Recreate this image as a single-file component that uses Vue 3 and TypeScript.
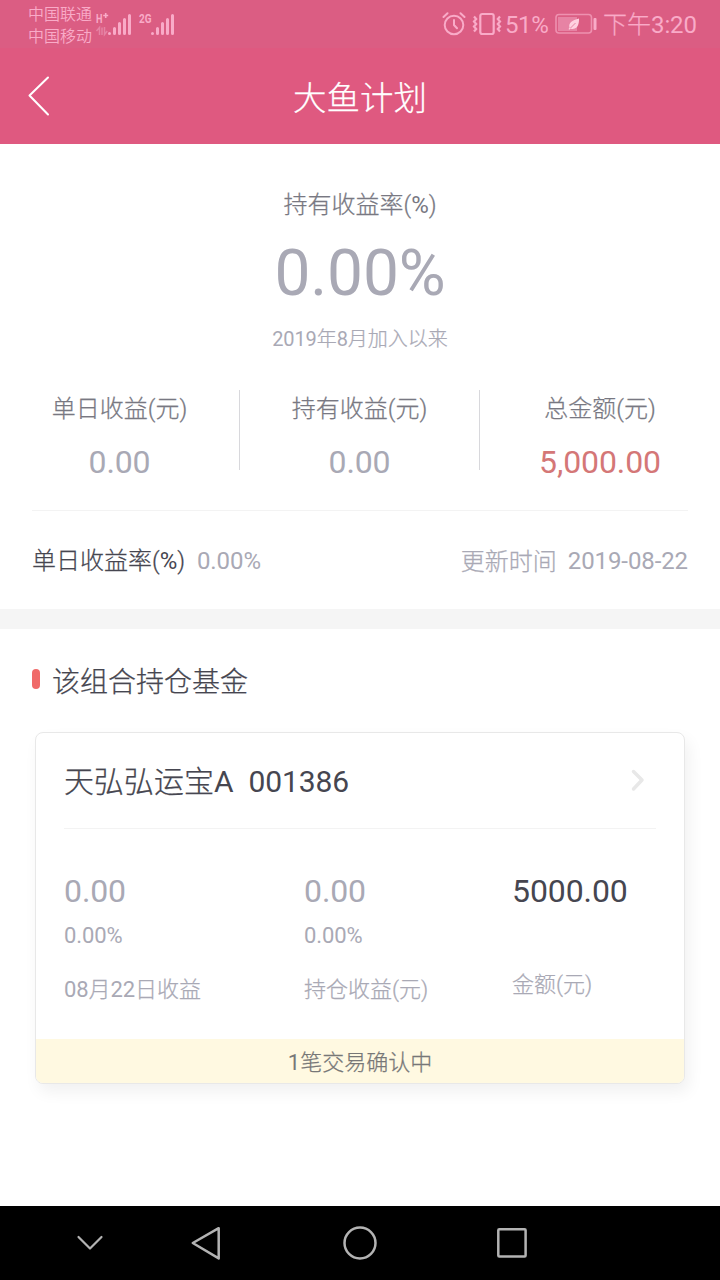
<script setup lang="ts">
interface Piece { text: string; cjk: boolean }

const split = (value: string): Piece[] =>
  (value.match(/[\u4e00-\u9fff()]+|[^\u4e00-\u9fff()]+/g) ?? []).map((text) => ({
    text,
    cjk: /[\u4e00-\u9fff()]/.test(text),
  }))

const stats = [
  { label: '单日收益(元)', value: '0.00', accent: false },
  { label: '持有收益(元)', value: '0.00', accent: false },
  { label: '总金额(元)', value: '5,000.00', accent: true },
]

const holdings = [
  { value: '0.00', rate: '0.00%', label: '08月22日收益' },
  { value: '0.00', rate: '0.00%', label: '持仓收益(元)' },
  { value: '5000.00', rate: '', label: '金额(元)' },
]
</script>

<template>
  <main class="screen">
    <div class="status">
      <div class="carriers"><span>中国联通</span><span>中国移动</span></div>
      <svg class="signals" width="82" height="48" viewBox="0 0 82 48">
        <g class="network">
          <text x="1" y="22.700" textLength="6.500" lengthAdjust="spacingAndGlyphs">H</text>
          <text x="44" y="22.700" textLength="12.500" lengthAdjust="spacingAndGlyphs">2G</text>
        </g>
        <path d="M8.200 15.500h5M10.700 13v5" fill="none" stroke="#f9abc8" stroke-width="1.600" />
        <path d="M1.500 31l3-3.500v7.500M7 27.500v7.500M9.500 27v7.500l2.700-3.500" fill="none" stroke="#e583a4" stroke-width="1.500" />
        <path d="M14.500 33.500v0M19.500 33.500v-5M24.500 33.500v-10M29.500 33.500v-14M34.500 33.500v-18M57.500 33.500v0M62.500 33.500v-5M67.500 33.500v-10M72.500 33.500v-14M77.500 33.500v-18" fill="none" stroke="#f9abc8" stroke-width="3" stroke-linecap="round" />
      </svg>
      <div class="indicators">
        <svg class="alarm" width="24" height="24" viewBox="0 0 24 24" fill="none" stroke="#f9abc8" stroke-width="2" stroke-linecap="round">
          <circle cx="12" cy="13" r="9.300" /><path d="M12 8v5l3 3.200M1.500 5l4-3.700M22.500 5l-4-3.700" />
        </svg>
        <svg class="vibrate" width="30" height="24" viewBox="0 0 30 24" fill="none" stroke="#f9abc8" stroke-width="2.200">
          <rect x="8.300" y="2" width="13.400" height="20" rx="2" />
          <path d="M2 4.500l2.200 2.500-2.200 2.500 2.200 2.500-2.200 2.500 2.200 2.500-2.200 2.500M28 4.500l-2.200 2.500 2.200 2.500-2.200 2.500 2.200 2.500-2.200 2.500 2.200 2.500" />
        </svg>
        <span class="percent">51%</span>
        <svg class="battery" width="42" height="22" viewBox="0 0 42 22">
          <rect x="1" y="1.500" width="35.500" height="18.500" rx="3" fill="none" stroke="#ee91b0" stroke-width="1.600" />
          <rect x="3" y="4" width="19" height="14" fill="#e783a4" />
          <rect x="38.500" y="5" width="3" height="12" rx="1" fill="#f9abc8" />
          <path d="M24 5.500c.3 5.500-1.500 9.500-5 10.300-1.200.3-2.500.1-3.400-.4l-1.300 1.400-.8-.7 1-1.400c-1.300-4.500 2.500-7.600 9.500-9.200z" fill="#ffd0e0" />
          <path d="M15.500 15l5-5" stroke="#e783a4" stroke-width="1" />
        </svg>
        <span class="clock"><span class="cjk">下午</span>3:20</span>
      </div>
    </div>
    <header class="bar">
      <svg class="back" width="24" height="42" viewBox="0 0 24 42"><path d="M21 2.500L2.500 20.500L21 39.500" fill="none" stroke="#fff" stroke-width="2" stroke-linecap="round" stroke-linejoin="round" /></svg>
      <h1 class="cjk">大鱼计划</h1>
    </header>

    <section class="summary">
      <p class="rate-label"><span v-for="p in split('持有收益率(%)')" :class="{ cjk: p.cjk }">{{ p.text }}</span></p>
      <p class="rate">0.00%</p>
      <p class="since"><span v-for="p in split('2019年8月加入以来')" :class="{ cjk: p.cjk }">{{ p.text }}</span></p>
      <div class="stats">
        <div v-for="s in stats" :key="s.label" class="stat">
          <p class="stat-label"><span v-for="p in split(s.label)" :class="{ cjk: p.cjk }">{{ p.text }}</span></p>
          <p class="stat-value" :class="{ accent: s.accent }">{{ s.value }}</p>
        </div>
      </div>
      <div class="daily">
        <span class="daily-label"><span v-for="p in split('单日收益率(%)')" :class="{ cjk: p.cjk }">{{ p.text }}</span></span>
        <span>0.00%</span>
        <span class="updated cjk">更新时间</span>
        <span>2019-08-22</span>
      </div>
    </section>

    <section class="funds">
      <h2><i class="pill"></i><span class="cjk">该组合持仓基金</span></h2>
      <article class="card">
        <div class="card-head">
          <span><span class="cjk">天弘弘运宝</span>A</span><span class="code">001386</span>
          <svg class="chevron" width="16" height="24" viewBox="0 0 16 24"><path d="M3.500 3.500l8.500 8.500-8.500 9" fill="none" stroke="#e8e8e8" stroke-width="3.500" stroke-linecap="round" stroke-linejoin="round" /></svg>
        </div>
        <div class="holdings">
          <div v-for="h in holdings" :key="h.label" class="holding" :class="{ total: !h.rate }">
            <p class="amount">{{ h.value }}</p>
            <p v-if="h.rate" class="small">{{ h.rate }}</p>
            <p class="caption"><span v-for="p in split(h.label)" :class="{ cjk: p.cjk }">{{ p.text }}</span></p>
          </div>
        </div>
        <div class="notice">1<span class="cjk">笔交易确认中</span></div>
      </article>
    </section>

    <nav class="nav">
      <svg width="720" height="74" viewBox="0 0 720 74" fill="none" stroke="#b3b3b3" stroke-width="2.500" stroke-linejoin="round" stroke-linecap="round">
        <path d="M78.500 31l11.500 11.500L101.500 31" stroke-width="2.200" />
        <path d="M218.700 22.200v30.200L192.800 37z" />
        <circle cx="360" cy="37" r="15.500" />
        <rect x="498.300" y="23.300" width="27.300" height="27.300" rx="1" />
      </svg>
    </nav>
  </main>
</template>

<style>
body { margin: 0; background: #fff; }
</style>

<style scoped>
.screen { width: 720px; height: 1280px; display: flex; flex-direction: column; overflow: hidden; background: #fff; color: #a9a9b5; font-family: Roboto, "Noto Sans CJK SC", sans-serif; font-weight: 400; letter-spacing: -.1px; }
p, h1, h2 { margin: 0; font-weight: 400; white-space: nowrap; }
.cjk { font-weight: 300; letter-spacing: 0; -webkit-text-stroke: .25px currentColor; }
.status { height: 48px; display: flex; background: #db5d83; color: #f9abc8; }
.carriers { width: 67px; padding: 4px 0 0 28px; display: flex; flex-direction: column; font-size: 16px; line-height: 22px; font-weight: 350; letter-spacing: 0; white-space: nowrap; }
.signals { flex: none; }
.network { fill: #f9abc8; font-weight: 700; font-size: 13.500px; letter-spacing: 0; }
.indicators { margin-left: auto; height: 48px; padding-right: 24px; display: flex; align-items: center; font-size: 24px; line-height: 48px; white-space: nowrap; }
.indicators > * { flex: none; }
.alarm { margin-right: 6px; }
.vibrate { margin-right: 3px; }
.percent { width: 50px; letter-spacing: -.4px; }
.battery { margin-right: 6px; }
.clock { width: 93px; }
.indicators span { padding-top: 2px; }
.indicators .cjk { padding: 0; }
.bar { height: 96px; display: grid; grid-template-columns: 80px 1fr 80px; align-items: center; background: #df5980; color: #fff; }
.back { margin-left: 27px; }
.bar h1 { text-align: center; font-size: 33.500px; line-height: 48px; padding-top: 5px; }
.summary { height: 465px; box-sizing: border-box; padding: 43px 0 0; text-align: center; }
.rate-label { font-size: 24px; line-height: 36px; color: #787882; }
.rate { margin-top: 12px; font-size: 64px; line-height: 78px; }
.since { margin-top: 11px; font-size: 20px; line-height: 30px; }
.stats { margin-top: 36px; height: 80px; display: grid; grid-template-columns: repeat(3, 1fr); grid-template-rows: 80px; }
.stat { box-sizing: border-box; border-right: 1px solid #d8d8dc; }
.stat:last-child { border: 0; }
.stat-label { font-size: 24px; line-height: 36px; padding-top: 1px; color: #787882; }
.stat-value { margin-top: 15px; font-size: 32px; line-height: 40px; }
.stat-value.accent { color: #d47777; }
.daily { margin: 40px 32px 0; border-top: 1px solid #f3f3f3; height: 98px; display: flex; align-items: center; gap: 12px; padding-top: 2px; box-sizing: border-box; font-size: 24px; line-height: 36px; white-space: nowrap; }
.daily-label { color: #464650; }
.daily .updated { margin-left: auto; margin-right: -1px; padding-top: 2px; }
.funds { flex: 1; border-top: 20px solid #f5f5f5; }
h2 { height: 103px; padding: 0 32px; display: flex; align-items: center; gap: 12px; font-size: 28px; line-height: 40px; color: #464650; }
h2 span { padding-top: 5px; }
.pill { width: 8px; height: 20px; border-radius: 4px; background: #f06a69; margin-top: -3px; }
.card { margin-left: 35px; width: 650px; height: 352px; box-sizing: border-box; border: 1px solid #e8e8e8; border-radius: 8px; box-shadow: 4px 8px 16px rgba(0, 0, 0, .06); overflow: hidden; background: #fff; }
.card-head { margin: 0 28px; height: 96px; box-sizing: border-box; border-bottom: 1px solid #f3f3f3; display: flex; align-items: center; padding-top: 3px; font-size: 30px; line-height: 44px; color: #464650; white-space: nowrap; }
.code { margin-left: 15px; }
.chevron { margin: -5px 10px 0 auto; }
.holdings { height: 210px; box-sizing: border-box; padding: 42px 28px 0; display: grid; grid-template-columns: 240px 208px 1fr; text-align: left; }
.amount { font-size: 32px; line-height: 40px; }
.small { margin-top: 10px; font-size: 22px; line-height: 30px; }
.caption { margin-top: 24px; font-size: 22px; line-height: 30px; }
.total .amount { color: #464650; }
.total .caption { margin-top: 59px; }
.notice { height: 44px; background: #fff9e1; color: #777; text-align: center; font-size: 22px; line-height: 48px; }
.nav { height: 74px; background: #000; }
.nav svg { display: block; }
</style>
